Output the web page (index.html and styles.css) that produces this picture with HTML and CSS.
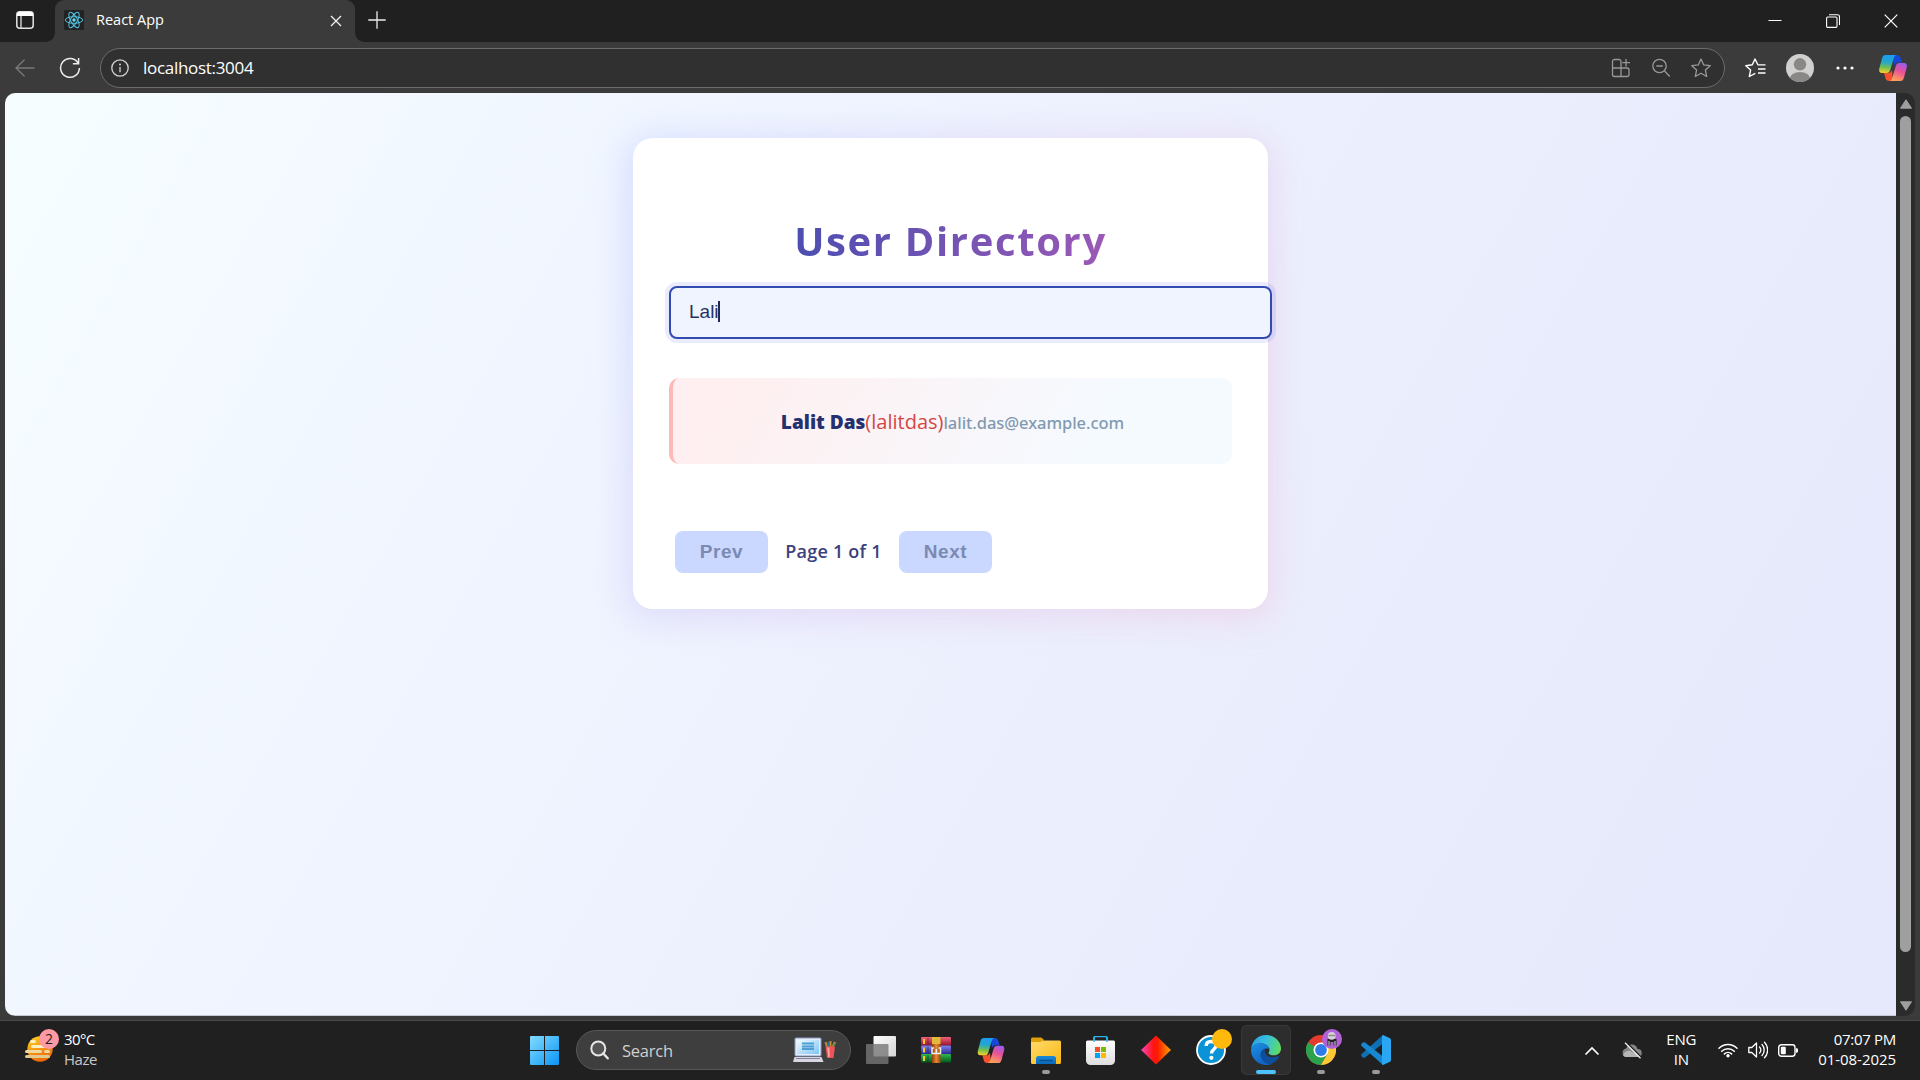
FILE: index.html
```html
<!DOCTYPE html>
<html lang="en">
<head>
<meta charset="utf-8">
<title>React App</title>
<link rel="stylesheet" href="styles.css">
</head>
<body>
<svg width="0" height="0" class="defs" aria-hidden="true">
  <defs>
    <linearGradient id="cpA" x1="0.3" y1="0" x2="0.2" y2="1"><stop offset="0" stop-color="#1b9df0"/><stop offset=".4" stop-color="#25a8c8"/><stop offset=".7" stop-color="#79c04a"/><stop offset="1" stop-color="#ffd02a"/></linearGradient>
    <linearGradient id="cpB" x1="0.8" y1="0" x2="0.4" y2="1"><stop offset="0" stop-color="#9b5cf0"/><stop offset=".45" stop-color="#e8509a"/><stop offset="1" stop-color="#ffa257"/></linearGradient>
    <symbol id="copilot" viewBox="0 0 28 26">
      <path d="M14 0h4c2 0 3 1 3.500 2.500l1.500 5h-4c-2 0-3 1-4 3z" fill="#1a48d6"/>
      <path d="M14 26h-4c-2 0-3-1-3.500-2.500L5 18h4c2 0 3-1 4-3z" fill="#f4512c"/>
      <path d="M6.500 0H18c-2 0-2.700 1.500-3.300 3.500l-3.500 11.500c-.6 2-1.700 3-3.700 3H3C.5 18-.3 16 .3 13.500L3 3.500C3.700 1 4.500 0 6.500 0z" fill="url(#cpA)"/>
      <path d="M21.500 26H10c2 0 2.700-1.500 3.300-3.500L16.800 11c.6-2 1.700-3 3.700-3H25c2.500 0 3.300 2 2.700 4.500L25 22.500c-.7 2.500-1.500 3.500-3.500 3.500z" fill="url(#cpB)"/>
    </symbol>
    <linearGradient id="win" x1="0" y1="0" x2="1" y2="1"><stop offset="0" stop-color="#83dcff"/><stop offset="1" stop-color="#0a94f5"/></linearGradient>
    <linearGradient id="sun" x1="0" y1="0" x2=".4" y2="1"><stop offset="0" stop-color="#ffd51f"/><stop offset="1" stop-color="#ee6a0c"/></linearGradient>
    <linearGradient id="screen" x1="0" y1="0" x2="1" y2="1"><stop offset="0" stop-color="#f0fbff"/><stop offset="1" stop-color="#7fc4f5"/></linearGradient>
    <linearGradient id="tv" x1="0" y1="0" x2="1" y2="1"><stop offset="0" stop-color="#fff"/><stop offset="1" stop-color="#d4d4d4"/></linearGradient>
    <linearGradient id="folder" x1="0" y1="0" x2="1" y2="1"><stop offset="0" stop-color="#ffdb69"/><stop offset="1" stop-color="#f9b818"/></linearGradient>
    <linearGradient id="folderTab" x1="0" y1="0" x2="0" y2="1"><stop offset="0" stop-color="#1a8ad8"/><stop offset="1" stop-color="#0a68b8"/></linearGradient>
    <linearGradient id="bag" x1="0" y1="0" x2="0" y2="1"><stop offset="0" stop-color="#fff"/><stop offset="1" stop-color="#dedede"/></linearGradient>
    <linearGradient id="diamond"><stop offset="0" stop-color="#f648c0"/><stop offset=".4" stop-color="#ff1515"/><stop offset=".55" stop-color="#ff1a00"/><stop offset="1" stop-color="#ffa500"/></linearGradient>
    <linearGradient id="edgeTop" x1="0" y1=".3" x2="1" y2=".5"><stop offset="0" stop-color="#2b9fe6"/><stop offset=".5" stop-color="#37c0dc"/><stop offset="1" stop-color="#5fdc62"/></linearGradient>
    <linearGradient id="edgeLow" x1="0" y1="0" x2=".6" y2="1"><stop offset="0" stop-color="#1f8fe4"/><stop offset="1" stop-color="#0f62c0"/></linearGradient>
    <linearGradient id="strap"><stop offset="0" stop-color="#8c3f0c"/><stop offset=".5" stop-color="#e88a34"/><stop offset="1" stop-color="#9a480f"/></linearGradient>
    <linearGradient id="red" x1="0" y1="0" x2="0" y2="1"><stop offset="0" stop-color="#f2637d"/><stop offset="1" stop-color="#96122e"/></linearGradient>
    <linearGradient id="blue" x1="0" y1="0" x2="0" y2="1"><stop offset="0" stop-color="#8383ee"/><stop offset="1" stop-color="#2a2a92"/></linearGradient>
    <linearGradient id="green" x1="0" y1="0" x2="0" y2="1"><stop offset="0" stop-color="#2fb850"/><stop offset="1" stop-color="#04591c"/></linearGradient>
  </defs>
</svg>

<header class="titlebar">
  <svg class="workspaces" width="18" height="18" viewBox="0 0 18 18"><rect x=".8" y=".8" width="16.400" height="16.400" rx="3" fill="none" stroke="#e4e4e4" stroke-width="1.500"/><path d="M1 5V3a2 2 0 0 1 2-2h12a2 2 0 0 1 2 2v2z" fill="#fff"/><path d="M5 5v12" stroke="#e4e4e4" stroke-width="1.300"/></svg>
  <div class="tab">
    <svg class="favicon" width="20" height="20" viewBox="0 0 20 20"><rect width="20" height="20" rx="1.500" fill="#222"/><g fill="none" stroke="#53c1de" stroke-width="1"><ellipse cx="10" cy="10" rx="8.700" ry="3.300"/><ellipse cx="10" cy="10" rx="8.700" ry="3.300" transform="rotate(60 10 10)"/><ellipse cx="10" cy="10" rx="8.700" ry="3.300" transform="rotate(120 10 10)"/></g><circle cx="10" cy="10" r="1.700" fill="#61dafb"/></svg>
    <span class="tab-title">React App</span>
    <svg class="tab-close" width="12" height="12" viewBox="0 0 12 12"><path d="M1 1l10 10M11 1L1 11" stroke="#eee" stroke-width="1.400"/></svg>
  </div>
  <svg class="new-tab" width="18" height="18" viewBox="0 0 18 18"><path d="M9 .3v17.400M.3 9h17.400" stroke="#ededed" stroke-width="1.300"/></svg>
  <div class="window-controls">
    <svg width="14" height="14" viewBox="0 0 14 14"><path d="M.5 6.500h13" stroke="#fff"/></svg>
    <svg width="14" height="14" viewBox="0 0 14 14"><rect x=".6" y="3" width="10.400" height="10.400" rx="1.200" fill="none" stroke="#fff" stroke-width="1.100"/><path d="M3 .7h8.500a2 2 0 0 1 2 2V11" fill="none" stroke="#fff" stroke-width="1.100"/></svg>
    <svg width="14" height="14" viewBox="0 0 14 14"><path d="M.7.7l12.600 12.600M13.300.7L.7 13.300" stroke="#fff" stroke-width="1.200"/></svg>
  </div>
</header>

<nav class="toolbar">
  <div class="tool back"><svg width="20" height="18" viewBox="0 0 20 18"><path d="M19.500 9H1M9.500.8L1 9l8.500 8.200" fill="none" stroke="#7a7a7a" stroke-width="1.300"/></svg></div>
  <div class="tool"><svg width="22" height="22" viewBox="0 0 22 22"><path d="M19.200 6.300A9.400 9.400 0 1 0 20.400 11M19.600 1v5.700h-5.700" fill="none" stroke="#ececec" stroke-width="1.500"/></svg></div>
  <div class="omnibox">
    <svg width="20" height="20" viewBox="0 0 20 20"><circle cx="10" cy="10" r="8.200" fill="none" stroke="#d6d6d6" stroke-width="1.300"/><path d="M10 9v5.200" stroke="#d6d6d6" stroke-width="1.300"/><circle cx="10" cy="6.500" r=".95" fill="#d6d6d6"/></svg>
    <span class="url">localhost:3004</span>
    <div class="omni-actions">
      <svg width="20" height="20" viewBox="0 0 20 20" fill="none" stroke="#989898" stroke-width="1.300"><path d="M10 10V3.500a2 2 0 0 0-2-2H3.500a2 2 0 0 0-2 2v13a2 2 0 0 0 2 2H16a2 2 0 0 0 2-2V12a2 2 0 0 0-2-2zM1.500 10H10v8.500M15 1v7.500M11.300 4.700H19"/></svg>
      <svg width="20" height="20" viewBox="0 0 20 20" fill="none" stroke="#989898" stroke-width="1.300"><circle cx="8.500" cy="8" r="6.700"/><path d="M5.300 8h6.500M13.300 12.800l5.500 5.700"/></svg>
      <svg width="20" height="20" viewBox="0 0 20 20" fill="none" stroke="#989898" stroke-width="1.300"><path stroke-linejoin="round" d="M10 1l2.700 5.900 6.500.8-4.800 4.400 1.300 6.400L10 15.300l-5.700 3.200 1.300-6.400L.8 7.700l6.500-.8z"/></svg>
    </div>
  </div>
  <svg class="favorites" width="21" height="20" viewBox="0 0 21 20" fill="none" stroke="#fff" stroke-width="1.400"><path stroke-linejoin="round" d="M12.900 6.800L10 1 7.300 6.800.8 7.700l4.800 4.400-1.300 6.400 6-3.200"/><path d="M12.500 6.900h8M13 11h7.500M13 15h7.500"/></svg>
  <svg class="avatar" width="28" height="28" viewBox="0 0 28 28"><clipPath id="av"><circle cx="14" cy="14" r="14"/></clipPath><g clip-path="url(#av)"><path d="M0 0h28v28H0z" fill="#d2d0ce"/><circle cx="14" cy="10.300" r="6.200" fill="#8a8886"/><ellipse cx="14" cy="25" rx="10.300" ry="7" fill="#8a8886"/></g></svg>
  <svg class="more" width="18" height="4" viewBox="0 0 18 4" fill="#fff"><circle cx="2" cy="2" r="1.600"/><circle cx="9" cy="2" r="1.600"/><circle cx="16" cy="2" r="1.600"/></svg>
  <svg class="copilot" width="28" height="26"><use href="#copilot"/></svg>
</nav>

<div class="viewport">
  <main class="page">
    <section class="card">
      <h1>User Directory</h1>
      <div class="search">Lali<span class="caret"></span></div>
      <div class="user"><span class="name">Lalit Das</span><span class="handle">(lalitdas)</span><span class="email">lalit.das@example.com</span></div>
      <div class="pager">
        <button disabled>Prev</button>
        <span class="page-count">Page 1 of 1</span>
        <button disabled>Next</button>
      </div>
    </section>
  </main>
  <div class="scrollbar">
    <svg width="12" height="10" viewBox="0 0 12 10"><path d="M6 .8L11.500 9.200H.5z" fill="#9f9f9f" stroke="#9f9f9f" stroke-linejoin="round"/></svg>
    <div class="thumb"></div>
    <svg width="12" height="10" viewBox="0 0 12 10"><path d="M6 9.200L11.500.8H.5z" fill="#9f9f9f" stroke="#9f9f9f" stroke-linejoin="round"/></svg>
  </div>
</div>

<footer class="taskbar">
  <div class="weather">
    <div class="weather-icon">
      <svg width="30" height="28" viewBox="0 0 30 28"><circle cx="15" cy="14" r="12.700" fill="url(#sun)"/><g fill="#fff0c0"><rect x="5" y="5" width="6" height="3" rx="1.500"/><rect x="6" y="10" width="22" height="3" rx="1.500"/><rect x="0" y="15" width="17" height="3" rx="1.500" fill="#f0d9a0"/><rect x="19" y="15" width="6" height="3" rx="1.500" fill="#f0d9a0"/><rect x="0" y="20" width="25" height="3" rx="1.500" fill="#e2c98c"/></g></svg>
      <span class="badge">2</span>
    </div>
    <div class="weather-text"><span class="temp">30°C</span><span class="cond">Haze</span></div>
  </div>

  <div class="apps">
    <div class="slot start"><svg width="29" height="29" viewBox="0 0 29 29" fill="url(#win)"><path d="M1 0h13v14H0V1a1 1 0 0 1 1-1zM15 0h13a1 1 0 0 1 1 1v13H15zM0 15h14v14H1a1 1 0 0 1-1-1zM15 15h14v13a1 1 0 0 1-1 1H15z"/></svg></div>
    <div class="searchbox">
      <svg width="19" height="20" viewBox="0 0 19 20"><circle cx="8.300" cy="8.500" r="7" fill="#555" stroke="#e6e6e6" stroke-width="2"/><path d="M13.300 13.500l4.400 4.800" stroke="#e6e6e6" stroke-width="2.400" stroke-linecap="round"/></svg>
      <span>Search</span>
      <svg class="highlight" width="44" height="26" viewBox="0 0 44 26"><rect x="2" y="1" width="26" height="18" rx="1" fill="#e6ecf8" stroke="#8a9cc4"/><rect x="4" y="3" width="22" height="14" fill="url(#screen)"/><path d="M9 6.500h12M9 9.500h12M9 12h12" stroke="#4d9fd4" stroke-width="1.800"/><path d="M1.500 20h27l2 5H0z" fill="#d8d6e2"/><path d="M3 21.500h24" stroke="#85839a"/><path d="M34 10l-1.500-5M37.500 10V4M39.500 10l2.500-5" stroke="#c28b30" stroke-width="2"/><path d="M35.800 10l-.8-5" stroke="#2677b8" stroke-width="1.600"/><path d="M40 10l3-4.500" stroke="#2d9a50" stroke-width="1.300"/><path d="M32.500 9.500h9.500L40.500 21h-6.500z" fill="#ee5358"/><path d="M34.300 10.500h2l.5 9.500h-1.500z" fill="#ffaaa8"/></svg>
    </div>
    <div class="slot"><svg width="30" height="28" viewBox="0 0 30 28"><rect x="7.500" y="0" width="22.500" height="20.500" rx="1" fill="url(#tv)"/><rect x="0" y="8" width="22.500" height="20" rx="1" fill="#777" opacity=".8"/></svg></div>
    <div class="slot"><svg width="30" height="26" viewBox="0 0 30 26"><rect y="0" width="30" height="8.500" rx="1" fill="url(#red)"/><rect y="8.500" width="30" height="8.500" rx="1" fill="url(#blue)"/><rect y="17" width="30" height="8.500" rx="1" fill="url(#green)"/><path d="M3 2v5M3 10.500v5M3 19v5" stroke="#ffc82a" stroke-width="2"/><path d="M7 1v7M7 9.500v7M7 18v7" stroke="#1a1a3a" stroke-opacity=".5"/><rect x="11" y="0" width="8.500" height="26" fill="url(#strap)"/><rect x="11" y="0" width="8.500" height="7" fill="#e4b83a"/><path d="M11 16.500V11h2M17.500 11h2v5.500h-9" fill="none" stroke="#eee" stroke-width="1.500"/><path d="M15.300 12v4" stroke="#eee" stroke-width="1.500"/></svg></div>
    <div class="slot"><svg width="28" height="25"><use href="#copilot"/></svg></div>
    <div class="slot running"><svg width="30" height="27" viewBox="0 0 30 27"><path d="M0 2a1.500 1.500 0 0 1 1.500-1.500H9c1.500 0 2.200.5 3.500 1.700V5H0z" fill="#e0a106"/><path d="M0 5h9c1.500 0 2-1.500 3.500-1.500h16A1.500 1.500 0 0 1 30 5v20.500A1.500 1.500 0 0 1 28.500 27h-27A1.500 1.500 0 0 1 0 25.500z" fill="url(#folder)"/><path d="M5 27v-5.500a2.500 2.500 0 0 1 2.500-2.500h15a2.500 2.500 0 0 1 2.500 2.500V27z" fill="url(#folderTab)"/><path d="M8.500 23.500h13" stroke="#084d8c" stroke-width="1.300"/></svg></div>
    <div class="slot store"><svg width="29" height="29" viewBox="0 0 29 29"><path d="M8 6V2a1.500 1.500 0 0 1 1.500-1.500h10A1.500 1.500 0 0 1 21 2v4" fill="none" stroke="#28b4ec" stroke-width="1.600"/><path d="M1.500 4.500h26A1.500 1.500 0 0 1 29 6v18.500a4.500 4.500 0 0 1-4.500 4.500h-20A4.500 4.500 0 0 1 0 24.500V6a1.500 1.500 0 0 1 1.500-1.500z" fill="url(#bag)"/><path d="M8 1v5M21 1v5" stroke="#28b4ec" stroke-width="1.500"/><path d="M9 11h5v5H9z" fill="#f25022"/><path d="M15 11h5v5h-5z" fill="#7fba00"/><path d="M9 17h5v5H9z" fill="#00a4ef"/><path d="M15 17h5v5h-5z" fill="#ffb900"/></svg></div>
    <div class="slot"><svg width="30" height="30" viewBox="0 0 30 30"><path d="M15 .5L30 15 15 29.500 0 15z" fill="url(#diamond)"/></svg></div>
    <div class="slot help"><svg width="30" height="30" viewBox="0 0 30 30"><circle cx="15" cy="15" r="14" fill="#0a94d6" stroke="#fff" stroke-width="1.800"/><path d="M10.200 11c0-3 2-4.500 4.800-4.500s5 1.500 5 4.200c0 3.500-4.500 3.800-4.500 7.800" fill="none" stroke="#fff" stroke-width="3.400"/><circle cx="15.400" cy="22.800" r="2.100" fill="#fff"/></svg><span class="dot"></span></div>
    <div class="slot running active"><svg width="30" height="30" viewBox="0 0 30 30"><path d="M0 14C.8 6 7 0 15 0c8.500 0 15 6.500 15 13.500 0 4-3 6.800-7.200 6.800-3 0-5.300-1-5.300-2.300 0-.9 1-1.500 1-3.300 0-3.500-4-6.200-8.800-6.200C5 8.500 1.500 10.500 0 14z" fill="url(#edgeTop)"/><path d="M0 15.500C0 11 4.500 8.300 9.500 8.300c4.500 0 8.500 2.500 9 5.700-5-1.700-9.500 2-8.500 7 1 5 6 7.800 10.500 8A15 15 0 0 1 0 15.500z" fill="url(#edgeLow)"/><path d="M14 13.500c-3.500 1.800-5.300 5-4.200 8.500C11.200 26.500 16 29 20.300 29c3.200-1.300 6-3.800 7.700-6.800.4-.8-.3-1.300-1-1-4.500 2-9.500 1.300-12-2-1.300-1.800-1.600-4-1-5.700z" fill="#0d4f9c"/></svg></div>
    <div class="slot running chrome"><svg width="30" height="30" viewBox="0 0 30 30"><circle cx="15" cy="15" r="15" fill="#e33b2e"/><path d="M15 15L2 7.500A15 15 0 0 0 15 30l6.500-11.300z" fill="#2ba24c"/><path d="M15 7.500h13A15 15 0 0 1 15 30l6.500-11.300z" fill="#fcc934"/><circle cx="15" cy="15" r="7.500" fill="#fff"/><circle cx="15" cy="15" r="5.900" fill="#2f7be8"/></svg><svg class="profile" width="20" height="20" viewBox="0 0 20 20"><circle cx="10" cy="10" r="10" fill="#b062d6"/><path d="M5.500 16.500V10h9v6.500h-3V13h-3v3.500z" fill="#222"/><circle cx="9.700" cy="6.800" r="3.900" fill="#d6d0d8"/><path d="M6.500 6.500h6.500" stroke="#888" stroke-width="1.300"/><path d="M7 12v4.500M13 12v4.500" stroke="#ddd"/></svg></div>
    <div class="slot running"><svg width="30" height="30" viewBox="0 0 30 30"><path d="M22 0v8.500L4 22.500c-.7.500-1.300.5-2 0L.6 21.200c-.7-.7-.7-1.500 0-2.200z" fill="#0f6fb4"/><path d="M22 30v-8.500L4 7.500c-.7-.5-1.300-.5-2 0L.6 8.800c-.7.7-.7 1.500 0 2.200z" fill="#1687d0"/><path d="M22 0l6.500 3c1 .5 1.500 1.200 1.500 2.300v19.400c0 1.100-.5 1.800-1.500 2.300L22 30l-1-.7V.7z" fill="#2aa6f2"/></svg></div>
  </div>

  <div class="tray">
    <svg class="chev" width="14" height="9" viewBox="0 0 14 9"><path d="M1 8l6-6 6 6" fill="none" stroke="#fff" stroke-width="1.700" stroke-linecap="round"/></svg>
    <svg class="cloud" width="20" height="17" viewBox="0 0 20 17"><path d="M4.500 15a4.300 4.300 0 0 1-.4-8.500A6 6 0 0 1 15.500 7a4 4 0 0 1 .5 8z" fill="#858585"/><path d="M1 13c2-5 7-5 9-3l8 4-2 1H4.500C3 15 2 14.500 1 13z" fill="#b5b5b5"/><path d="M4 0l15 15" stroke="#202020" stroke-width="1.500"/><path d="M3 .8l15.500 15.400" stroke="#f2f2f2" stroke-width="1.300"/></svg>
    <div class="lang"><span>ENG</span><span>IN</span></div>
    <svg class="wifi" width="20" height="16" viewBox="0 0 20 16" fill="none" stroke="#fff" stroke-width="1.500" stroke-linecap="round"><path d="M1 6.300a12.700 12.700 0 0 1 18 0M3.700 9.200a9 9 0 0 1 12.600 0M6.400 11.900a5.200 5.200 0 0 1 7.200 0"/><circle cx="10" cy="13.800" r="1.700" fill="#fff" stroke="none"/></svg>
    <svg class="speaker" width="20" height="18" viewBox="0 0 20 18" fill="none" stroke="#fff" stroke-width="1.300" stroke-linecap="round" stroke-linejoin="round"><path d="M.8 6.500v5h3L8.500 16V2L3.800 6.500zM11.500 6a4 4 0 0 1 0 6M14 3.500a8 8 0 0 1 0 11M16.500 1.300a11 11 0 0 1 0 15.400"/></svg>
    <svg class="battery" width="20" height="13" viewBox="0 0 20 13"><rect x=".7" y=".7" width="16.300" height="11.600" rx="2.700" fill="none" stroke="#fff" stroke-width="1.400"/><rect x="2.800" y="2.800" width="5" height="7.400" rx="1" fill="#fff"/><path d="M18 4.300h.6a1.400 1.400 0 0 1 1.400 1.400v1.600a1.400 1.400 0 0 1-1.400 1.400H18z" fill="#fff"/></svg>
    <div class="clock"><span class="time">07:07 PM</span><span class="date">01-08-2025</span></div>
  </div>
</footer>
</body>
</html>
```
FILE: styles.css
```css
* { box-sizing: border-box; }

body {
  margin: 0;
  width: 1920px;
  height: 1080px;
  overflow: hidden;
  display: flex;
  flex-direction: column;
  background: #3b3b3b;
  font-family: "Open Sans", "Noto Sans", sans-serif;
  color: #fff;
}

svg { display: block; flex: none; }
.defs { position: absolute; }

/* Title bar */
.titlebar {
  height: 42px;
  flex: none;
  display: flex;
  align-items: center;
  background: #202020;
}
.workspaces { margin: 0 21px 2px 16px; }
.tab {
  position: relative;
  width: 300px;
  height: 42px;
  display: flex;
  align-items: center;
  padding: 0 13px 2px 9px;
  background: #3b3b3b;
  border-radius: 9px 9px 0 0;
}
.tab::before,
.tab::after {
  content: "";
  position: absolute;
  bottom: 0;
  width: 9px;
  height: 9px;
}
.tab::before { left: -9px; background: radial-gradient(circle at 0 0, #202020 8.5px, #3b3b3b 9px); }
.tab::after { right: -9px; background: radial-gradient(circle at 100% 0, #202020 8.5px, #3b3b3b 9px); }
.tab-title { margin-left: 12px; font-size: 14.5px; line-height: 20px; }
.tab-close { margin-left: auto; margin-top: 2px; }
.new-tab { margin: 0 0 2px 13px; }
.window-controls { display: flex; gap: 44px; margin-left: auto; margin-right: 22px; }

/* Toolbar */
.toolbar {
  height: 51px;
  flex: none;
  display: flex;
  align-items: center;
}
.tool { width: 40px; display: flex; justify-content: center; }
.back { width: 50px; }
.omnibox {
  width: 1625px;
  height: 40px;
  margin-left: 10px;
  padding: 0 13px 0 9px;
  display: flex;
  align-items: center;
  background: #303030;
  border: 1px solid #6c6c6c;
  border-radius: 20px;
}
.url { margin-left: 13px; font-size: 17px; line-height: 24px; letter-spacing: -0.3px; }
.omni-actions { display: flex; gap: 20px; margin-left: auto; }
.favorites { margin-left: 20px; }
.avatar { margin-left: 20px; }
.more { margin-left: 22px; }
.copilot { margin-left: 25px; }

/* Browser viewport */
.viewport {
  height: 923px;
  width: 1910px;
  margin-left: 5px;
  flex: none;
  display: flex;
  border-radius: 10px;
  overflow: hidden;
}
.page {
  width: 1891px;
  padding-top: 45px;
  border-bottom: 1px solid #c6c8d4;
  background: linear-gradient(120deg, #f6fdff 0%, #f0f5ff 30%, #e8ebfc 78%, #e6e8fb 100%);
  isolation: isolate;
}
.scrollbar {
  width: 19px;
  padding: 6px 0 5px;
  display: flex;
  flex-direction: column;
  align-items: center;
  background: #2b2b2b;
}
.thumb { width: 11px; height: 836px; margin: 7px 0 auto; border-radius: 6px; background: #9f9f9f; }

/* Directory card */
.card {
  position: relative;
  width: 635px;
  height: 471px;
  margin-left: 628px;
  padding: 76px 36px 36px;
  border-radius: 20px;
  background: #fff;
}
.card::before {
  content: "";
  position: absolute;
  z-index: -1;
  inset: 2px -4px -8px -4px;
  border-radius: 20px;
  background: linear-gradient(120deg, rgba(150, 170, 255, 0.36), rgba(205, 165, 230, 0.32) 50%, rgba(245, 165, 200, 0.34));
  filter: blur(18px);
}
h1 {
  width: max-content;
  margin: 0 auto;
  font-size: 40px;
  line-height: 54px;
  font-weight: 700;
  letter-spacing: 1.65px;
  color: transparent;
  background: linear-gradient(90deg, #4b4eb0, #9b59b6);
  background-clip: text;
  -webkit-background-clip: text;
}
.search {
  width: 603px;
  height: 53px;
  margin-top: 18px;
  padding: 0 0 2px 18px;
  display: flex;
  align-items: center;
  border: 2px solid #324bb0;
  border-radius: 8px;
  background: #f0f4ff;
  box-shadow: 0 0 0 4px rgba(90, 100, 240, 0.13);
  font: 19px "Liberation Sans", Arial, sans-serif;
  color: #27335f;
}
.caret { width: 2px; height: 21px; margin-left: -1px; background: #1c2a55; }
.user {
  height: 86px;
  margin-top: 39px;
  padding-top: 1px;
  display: flex;
  align-items: baseline;
  justify-content: center;
  border-left: 4px solid #ffb8b8;
  border-radius: 10px;
  background: linear-gradient(120deg, #ffeff0 10%, #f5faff 75%);
  line-height: 86px;
}
.name { font-size: 19px; font-weight: 800; color: #25316f; }
.handle { font-size: 20px; color: #d64545; }
.email { font-family: "Noto Sans", sans-serif; font-size: 16.5px; font-weight: 500; letter-spacing: -0.05px; color: #829ab1; }
.pager { display: flex; align-items: center; margin: 67px 0 0 6px; }
button {
  width: 93px;
  height: 42px;
  padding: 0;
  border: 0;
  border-radius: 8px;
  background: #cad7ff;
  color: #7c8ab2;
  font: 700 19px "Liberation Sans", Arial, sans-serif;
  letter-spacing: 0.6px;
}
.page-count {
  width: 131px;
  padding-bottom: 2px;
  text-align: center;
  font-size: 18px;
  font-weight: 600;
  letter-spacing: 0.22px;
  color: #3c417c;
}

/* Taskbar */
.taskbar {
  height: 59px;
  margin-top: auto;
  flex: none;
  display: flex;
  align-items: center;
  background: #202020;
  box-shadow: 0 -1px 0 #484848;
}
.weather { width: 519px; display: flex; align-items: center; padding-left: 25px; }
.weather-icon { position: relative; margin-top: -4px; }
.badge {
  position: absolute;
  top: -6px;
  left: 14px;
  width: 20px;
  height: 20px;
  border-radius: 50%;
  background: #ff99a4;
  color: #202020;
  font-size: 14px;
  line-height: 20px;
  text-align: center;
}
.weather-text,
.lang,
.clock { display: flex; flex-direction: column; margin-bottom: 3px; font-size: 15px; line-height: 20px; }
.weather-text { margin-left: 9px; }
.temp { letter-spacing: -0.6px; }
.cond { letter-spacing: -0.5px; color: #c9c9c9; }

.apps { display: flex; align-items: center; gap: 5px; margin-bottom: 1px; }
.slot {
  position: relative;
  width: 50px;
  height: 50px;
  display: flex;
  align-items: center;
  justify-content: center;
}
.start { margin-right: 2px; }
.store { padding-right: 1px; }
.running::after {
  content: "";
  position: absolute;
  bottom: 1px;
  left: 21px;
  width: 8px;
  height: 4px;
  border-radius: 2px;
  background: #9a9a9a;
}
.active { background: #2d2d2d; border-radius: 6px; box-shadow: inset 0 0 0 1px #383838; }
.active::after { left: 15px; width: 20px; background: #4cc2ff; }
.dot {
  position: absolute;
  top: 4px;
  right: 4px;
  width: 20px;
  height: 20px;
  border-radius: 50%;
  background: #ffb90c;
}
.profile { position: absolute; top: 4px; right: 4px; }
.searchbox {
  width: 275px;
  height: 40px;
  padding: 0 13px;
  display: flex;
  align-items: center;
  border: 1px solid #575757;
  border-radius: 20px;
  background: #3e3e3e;
  color: #cfcfcf;
  font-size: 16.5px;
  letter-spacing: -0.25px;
}
.searchbox span { margin: 0 auto 0 13px; }

.tray { display: flex; align-items: center; margin: 0 0 1px auto; padding-right: 24px; }
.cloud { margin-left: 23px; }
.lang { margin-left: 24px; align-items: center; letter-spacing: -0.2px; }
.wifi { margin-left: 22px; }
.speaker { margin-left: 10px; }
.battery { margin-left: 10px; }
.clock { margin-left: 20px; align-items: flex-end; }
.time { letter-spacing: -0.3px; }
.date { letter-spacing: -0.05px; }
```
